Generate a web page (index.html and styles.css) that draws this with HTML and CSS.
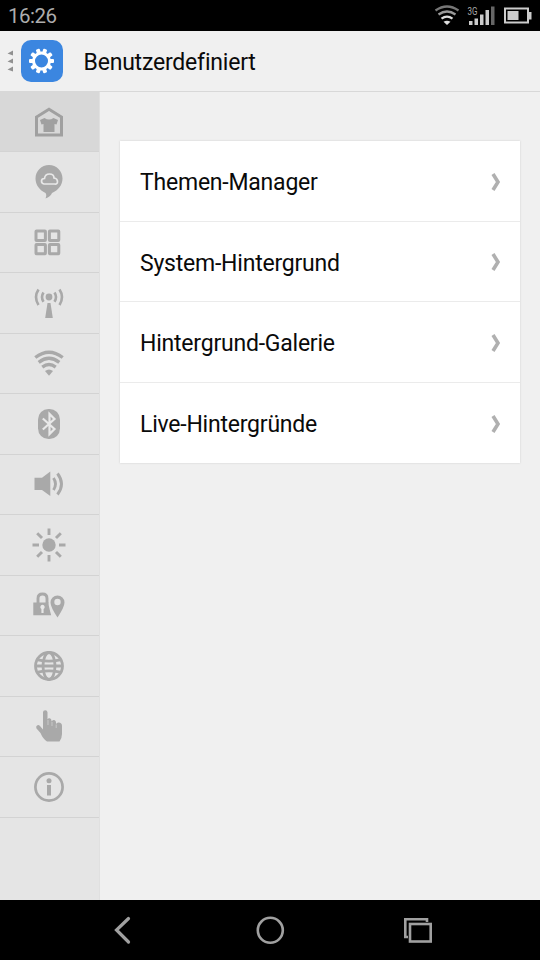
FILE: index.html
```html
<!DOCTYPE html>
<html lang="de">
<head>
<meta charset="utf-8">
<title>Benutzerdefiniert</title>
<link rel="stylesheet" href="styles.css">
</head>
<body>
<div class="screen">
  <div class="status">
    <span class="clock">16:26</span>
    <svg class="status-icons" width="108" height="31" viewBox="432 0 108 31">
      <g fill="none" stroke-width="2.300">
        <path d="M435.500 10.500Q447 2.500 458.500 10.500" stroke="#777"/>
        <path d="M438.500 14.500Q447 8.500 455.500 14.500" stroke="#999"/>
        <path d="M441.500 18.700Q447 14.500 452.500 18.700" stroke="#ddd"/>
      </g>
      <path d="M443.500 21.800Q447 19.800 450.500 21.800L447 25Z" fill="#ddd"/>
      <text class="net" x="467.500" y="15" textLength="10" lengthAdjust="spacingAndGlyphs">3G</text>
      <g fill="#ccc"><path d="M469 21h3.500v4H469zM474.500 18.500h3.500v6.500h-3.500zM480 14.500h3.500V25H480zM485.500 10h3.500v15h-3.500z"/><path fill="#666" d="M491 6.500h3.500V25H491z"/></g>
      <rect x="505" y="8.500" width="23" height="14" fill="none" stroke="#ccc" stroke-width="2"/>
      <path d="M507.500 11H518.500V20H507.500zM529 12h2.500v7.500H529z" fill="#ccc"/>
    </svg>
  </div>
  <header class="header">
    <svg class="app-icon" width="63" height="60" viewBox="0 31 63 60">
      <path d="M7.500 53.500l5.500-3v5zM7.500 61.500l5.500-3v5zM7.500 69.500l5.500-3v5z" fill="#909090"/>
      <rect x="21" y="40" width="42" height="42" rx="10" fill="#3b86e0"/>
      <g transform="translate(41.500 61)" fill="#fff">
        <circle r="8" fill="none" stroke="#fff" stroke-width="3"/>
        <g id="teeth">
          <rect x="-2" y="-12.500" width="4" height="4.500" rx="1" transform="rotate(18)"/>
          <rect x="-2" y="-12.500" width="4" height="4.500" rx="1" transform="rotate(54)"/>
          <rect x="-2" y="-12.500" width="4" height="4.500" rx="1" transform="rotate(90)"/>
          <rect x="-2" y="-12.500" width="4" height="4.500" rx="1" transform="rotate(126)"/>
          <rect x="-2" y="-12.500" width="4" height="4.500" rx="1" transform="rotate(162)"/>
        </g>
        <use href="#teeth" transform="rotate(180)"/>
      </g>
    </svg>
    <h1 class="title">Benutzerdefiniert</h1>
  </header>
  <div class="content">
    <nav class="sidebar">
      <div class="tab active"><svg class="icon" viewBox="0 0 40 40"><path d="M7.500 33V15L20 7.300 32.500 15V33Z" class="line" stroke-width="3"/><path d="M15.500 16Q20 19 24.500 16L29 18 27.500 22.500 25.500 22V30H14.500V22L12.500 22.500 11 18Z"/></svg></div>
      <div class="tab"><svg class="icon" viewBox="0 0 40 40"><path d="M20 3C12.500 3 6.500 9 6.500 16.500 6.500 23 10.500 28 16.500 31Q18 33 16.500 36.500 21.500 34.500 23 31C29.500 28 33.500 23 33.500 16.500 33.500 9 27.500 3 20 3Z"/><path d="M15 22Q12.500 21.500 12.500 19T15.500 16.500Q16 12 20.500 12T25 16Q28.500 16.500 28.500 19.500T25.500 22Z" fill="#a9a9a9" stroke="#e8e8e8" stroke-width="1.700"/></svg></div>
      <div class="tab"><svg class="icon" viewBox="0 0 40 40"><g class="line" stroke-width="3"><rect x="7" y="9" width="9.400" height="9.400" rx=".5"/><rect x="20.400" y="9" width="9.400" height="9.400" rx=".5"/><rect x="7" y="22.400" width="9.400" height="9.400" rx=".5"/><rect x="20.400" y="22.400" width="9.400" height="9.400" rx=".5"/></g></svg></div>
      <div class="tab"><svg class="icon" viewBox="0 0 40 40"><circle cx="20" cy="14" r="3.400"/><path d="M18.500 20h3l2.300 15h-7.600z"/><path class="line" stroke-width="2.600" d="M14.500 9.500Q11.500 14 14.500 18.700M25.500 9.500Q28.500 14 25.500 18.700M9.500 6.500Q4.500 14 9.500 22M30.500 6.500Q35.500 14 30.500 22"/></svg></div>
      <div class="tab"><svg class="icon" viewBox="0 0 40 40"><path class="line" stroke-width="3.400" d="M6.300 14.500Q20 4 33.700 14.500M9.700 19.300Q20 11.300 30.300 19.300M13.300 24.200Q20 19 26.700 24.200"/><path d="M16 28Q20 25 24 28L20 32.800Z"/></svg></div>
      <div class="tab"><svg class="icon" viewBox="0 0 40 40"><rect x="9" y="5" width="22" height="30" rx="10.500"/><path d="M13.800 14.500L25.500 25 20.500 30V10L25.500 15 13.800 25.500" fill="none" stroke="#e8e8e8" stroke-width="2.200"/></svg></div>
      <div class="tab"><svg class="icon" viewBox="0 0 40 40"><path d="M5.500 13.800H13L21.300 7.500V32L13 26H5.500Z"/><path class="line" stroke-width="2.900" d="M24.500 14Q28.500 20 24.500 26M28.500 9.500Q36.500 20 28.500 30.500"/></svg></div>
      <div class="tab"><svg class="icon" viewBox="0 0 40 40"><circle cx="20" cy="20" r="6.700"/><path class="line" stroke-width="2.900" d="M20 3.500V10M20 30v6.500M3.500 20H10M30 20h6.500M8.200 8.200l4.800 4.800M27 27l4.800 4.800M8.200 31.800L13 27M27 13l4.800-4.800"/></svg></div>
      <div class="tab"><svg class="icon" viewBox="0 0 40 40"><path d="M4.300 17.500H19.500Q19.500 21 22.200 30.200H4.300Z"/><path class="line" stroke-width="2.900" d="M9 18V13.500Q9 9 13.500 9T18 13.500V18"/><path d="M13.500 19.800a2.200 2.200 0 0 1 1.100 4.100V28h-2.200v-4.100a2.200 2.200 0 0 1 1.100-4.100z" fill="#e8e8e8"/><path fill-rule="evenodd" d="M28.500 10.500A7 7 0 0 0 21.500 17.500Q21.500 22 28.500 32.500 35.500 22 35.500 17.500A7 7 0 0 0 28.500 10.500ZM28.500 13.800a3.200 3.200 0 1 1 0 6.400 3.200 3.200 0 0 1 0-6.400Z"/></svg></div>
      <div class="tab"><svg class="icon" viewBox="0 0 40 40"><g class="line" stroke-width="2.800"><circle cx="20" cy="20" r="13.500"/><ellipse cx="20" cy="20" rx="6" ry="13.500"/><path d="M6.500 20h27M9 13.800Q20 16.500 31 13.800M9 26.200Q20 23.500 31 26.200"/></g></svg></div>
      <div class="tab"><svg class="icon" viewBox="0 0 40 40"><path d="M14 6.200Q14 4.200 16.200 4.200T18.500 6.200V13.500Q19 12 20.700 12.200T22.500 14.500V15.500Q23.500 13.500 25.300 14T27 16.500V18Q28 16.200 29.700 16.500 33 16.500 33 20V28Q33 32 30.500 35.500H18Q14 33 11.500 27L7.500 22.500Q6.500 20.500 8 19.500T11 20L14 23.500Z"/><path d="M19 14v5M23 16v4M27.200 18.500v3.500" stroke="#d0d0d0" stroke-width=".8"/></svg></div>
      <div class="tab"><svg class="icon" viewBox="0 0 40 40"><circle class="line" stroke-width="2.700" cx="20" cy="20" r="13.600"/><circle cx="20" cy="13.800" r="2.500"/><path d="M18 18h4v10.500h-4z"/></svg></div>
    </nav>
    <main class="main">
      <div class="card">
        <div class="row"><span>Themen-Manager</span><svg class="chev" viewBox="0 0 10 20"><path d="M2 2L7 10 2 18"/></svg></div>
        <div class="row"><span>System-Hintergrund</span><svg class="chev" viewBox="0 0 10 20"><path d="M2 2L7 10 2 18"/></svg></div>
        <div class="row"><span>Hintergrund-Galerie</span><svg class="chev" viewBox="0 0 10 20"><path d="M2 2L7 10 2 18"/></svg></div>
        <div class="row"><span>Live-Hintergründe</span><svg class="chev" viewBox="0 0 10 20"><path d="M2 2L7 10 2 18"/></svg></div>
      </div>
    </main>
  </div>
  <footer class="navbar">
    <svg width="540" height="60" viewBox="0 900 540 60" fill="none" stroke="#a0a0a0">
      <path d="M128.500 918.500L116.500 930 128.500 942" stroke-width="3.200" stroke-linecap="round"/>
      <circle cx="270.300" cy="930.300" r="12.500" stroke-width="2.600"/>
      <path d="M427 922V919.200H405.300V937H408" stroke-width="2.600"/>
      <rect x="410" y="924" width="20.700" height="17.500" stroke-width="2.600"/>
    </svg>
  </footer>
</div>
</body>
</html>
```

FILE: styles.css
```css
body { margin: 0; }
.screen {
  width: 540px;
  height: 960px;
  display: flex;
  flex-direction: column;
  overflow: hidden;
  background: #f0f0f0;
  font-family: Roboto, "Liberation Sans", sans-serif;
  font-variant-ligatures: none;
  color: #0a0a0a;
}
.status {
  height: 31px;
  flex: none;
  background: #000;
  display: flex;
  justify-content: space-between;
}
.clock {
  padding-left: 8px;
  font-size: 20.5px;
  letter-spacing: -0.5px;
  line-height: 33px;
  color: #adadad;
}
.net { font-size: 10px; fill: #aaa; }
.header {
  height: 60px;
  flex: none;
  display: flex;
  border-bottom: 1px solid #d8d8d8;
}
.title {
  margin: 0;
  padding-left: 20.5px;
  font-size: 23px;
  font-weight: 400;
  letter-spacing: -0.2px;
  line-height: 64px;
}
.content { flex: 1; min-height: 0; display: flex; }
.sidebar {
  width: 100px;
  box-sizing: border-box;
  background: #e5e5e5;
  border-right: 1px solid #e0e0e0;
}
.tab {
  height: 60.5px;
  box-sizing: border-box;
  border-bottom: 1px solid #d3d3d3;
  display: flex;
  align-items: center;
  padding-left: 29px;
}
.tab.active { background: #d8d8d8; height: 60px; }
.icon { width: 40px; height: 40px; fill: #a9a9a9; }
.line { fill: none; stroke: #a9a9a9; }
.active .icon { fill: #a0a0a0; }
.active .line { stroke: #a0a0a0; }
.main { flex: 1; padding: 49px 20px 0; }
.card { background: #fff; box-shadow: 0 0 2px #ccc; }
.row {
  height: 81px;
  box-sizing: border-box;
  padding: 1px 19px 0 20px;
  display: flex;
  align-items: center;
  justify-content: space-between;
  font-size: 23px;
  letter-spacing: -0.22px;
  border-bottom: 1px solid #ebebeb;
}
.row span { padding-top: 2px; }
.row:nth-child(2) { height: 80px; }
.row:last-child { height: 80px; border-bottom: 0; }
.chev {
  width: 10px;
  height: 20px;
  fill: none;
  stroke: #b0b0b0;
  stroke-width: 3.6;
}
.navbar { height: 60px; flex: none; background: #000; }
.navbar svg { display: block; }
```
